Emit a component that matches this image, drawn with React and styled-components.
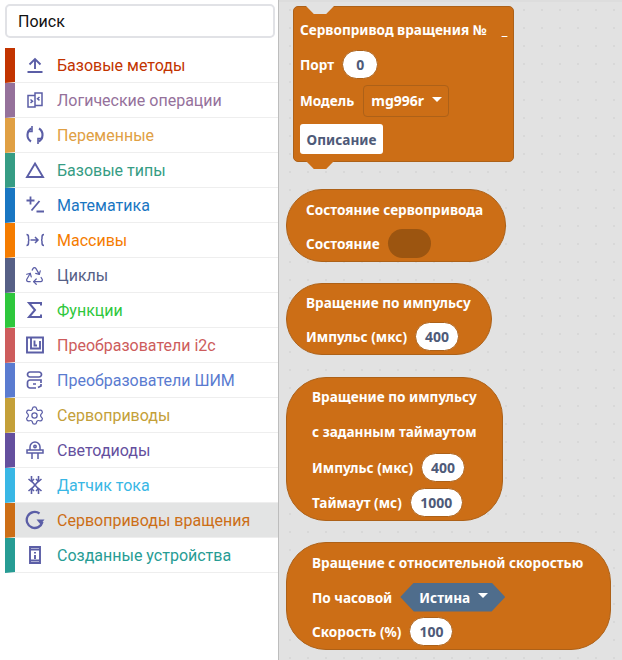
import React from 'react';
import styled, { createGlobalStyle, css } from 'styled-components';
import { Recycle, Settings } from 'lucide-react';

const ICON = '#5b5ea6';

const GlobalStyle = createGlobalStyle`
  html, body {
    margin: 0;
    padding: 0;
    background: #fff;
  }
  body {
    width: 622px;
    height: 660px;
    overflow: hidden;
    font-family: Roboto, "Liberation Sans", sans-serif;
  }
`;

const Page = styled.div`
  display: flex;
  width: 622px;
  height: 660px;
  overflow: hidden;
`;

const Sidebar = styled.aside`
  flex: 0 0 279px;
  box-sizing: border-box;
  padding: 4px 0 0 5px;
  background: #fff;
  border-right: 1px solid #bdbdbd;
`;

const SearchBox = styled.div`
  box-sizing: border-box;
  width: 270px;
  height: 34px;
  margin: 0 0 10px;
  padding: 0 11px;
  display: flex;
  align-items: center;
  border: 2px solid #e1e2e6;
  border-radius: 5px;
  font-size: 16px;
  color: #111;
`;

const CategoryList = styled.ul`
  list-style: none;
  margin: 0;
  padding: 0;
`;

const Category = styled.li`
  box-sizing: border-box;
  height: 35px;
  display: flex;
  align-items: center;
  border-left: 10px solid ${p => p.$color};
  border-bottom: 1px solid #eeeeee;
  background: ${p => (p.$active ? '#e3e4e4' : '#fff')};
  color: ${p => p.$color};
  font-size: 16px;
`;

const IconSlot = styled.span`
  flex: 0 0 42px;
  display: flex;
  justify-content: center;
  padding-right: 3px;
  box-sizing: border-box;
  svg {
    display: block;
  }
`;

const Workspace = styled.main`
  flex: 1;
  min-width: 0;
  display: flex;
  flex-direction: column;
  align-items: flex-start;
  padding: 6px 0 0 7px;
  background-color: #e2e2e2;
  background-image: radial-gradient(circle at center, #d2d2d2 0.6px, transparent 0.9px);
  background-size: 18px 18px;
  background-position: 2px 1px;
  box-shadow: inset 0 2px 0 #dddddd;
  overflow: hidden;
`;

const blockBase = css`
  box-sizing: border-box;
  background: #cc6e16;
  border: 1px solid #ad6118;
  color: #fff;
  font-family: "Noto Sans", "Open Sans", sans-serif;
  font-weight: 700;
  font-size: 13.6px;
  display: flex;
  flex-direction: column;
`;

const Block = styled.section`
  ${blockBase};
  width: ${p => p.$width}px;
  height: ${p => p.$height}px;
  margin-top: ${p => p.$gap}px;
  padding: ${p => p.$pad};
  border-radius: ${p => p.$radius}px;
`;

const NotchedBlock = styled.section`
  ${blockBase};
  position: relative;
  width: 221px;
  height: 156px;
  margin-left: 7px;
  padding: 6px 0 0 6px;
  border-radius: 5px;

  &::before {
    content: '';
    position: absolute;
    top: -1px;
    left: 12px;
    width: 28px;
    height: 8px;
    background: #e2e2e2;
    clip-path: polygon(0 0, 100% 0, 72% 100%, 28% 100%);
  }

  &::after {
    content: '';
    position: absolute;
    bottom: -8px;
    left: 12px;
    width: 28px;
    height: 8px;
    background: #cc6e16;
    clip-path: polygon(0 0, 100% 0, 72% 100%, 28% 100%);
  }
`;

const Row = styled.div`
  height: ${p => p.$height ?? 36}px;
  display: flex;
  align-items: center;
  gap: ${p => p.$gap ?? 8}px;
  white-space: nowrap;
`;

const Pill = styled.span`
  box-sizing: border-box;
  width: ${p => p.$width}px;
  height: 29px;
  display: flex;
  align-items: center;
  justify-content: center;
  background: #fff;
  border: 1px solid #ad6118;
  border-radius: 15px;
  color: #4e5a78;
  font-size: 14px;
`;

const Toggle = styled.span`
  width: 43px;
  height: 29px;
  border-radius: 15px;
  background: #9c5510;
`;

const Caret = styled.i`
  display: inline-block;
  width: 0;
  height: 0;
  margin-left: 8px;
  margin-top: -3px;
  border-left: 5px solid transparent;
  border-right: 5px solid transparent;
  border-top: 5px solid #fff;
`;

const ModelSelect = styled.span`
  box-sizing: border-box;
  width: 86px;
  height: 32px;
  display: flex;
  align-items: center;
  padding-left: 7px;
  border: 1px solid #ad6118;
  border-radius: 4px;
  font-size: 14px;
`;

const HexSelect = styled.span`
  width: 105px;
  height: 29px;
  display: flex;
  align-items: center;
  justify-content: center;
  padding-left: 2px;
  box-sizing: border-box;
  background: #4f6d8c;
  clip-path: polygon(0 50%, 13% 0, 87% 0, 100% 50%, 87% 100%, 13% 100%);
`;

const DescriptionButton = styled.button`
  box-sizing: border-box;
  width: 83px;
  height: 30px;
  margin-top: 5px;
  padding: 0;
  background: #fff;
  border: none;
  border-radius: 3px;
  color: #4e5a78;
  font: inherit;
`;

const Icon = ({ children, size = 20, width = 1.6 }) => (
  <svg
    width={size}
    height={size}
    viewBox="0 0 20 20"
    fill="none"
    stroke={ICON}
    strokeWidth={width}
  >
    {children}
  </svg>
);

const categories = [
  {
    label: 'Базовые методы',
    color: '#c23400',
    icon: (
      <Icon width={1.9}>
        <path d="M2.500 17h15M10 14V4M4.500 9.500 10 4l5.500 5.500" />
      </Icon>
    ),
  },
  {
    label: 'Логические операции',
    color: '#95719b',
    icon: (
      <Icon width={1.5}>
        <path d="M10 5.500H3v11.500h7zM10 3h7v12.500h-7zM10 3v14" />
        <path d="M5.500 9.500l2 1.700-2 1.700" />
        <path d="M14.500 7l-2 1.700 2 1.700" />
      </Icon>
    ),
  },
  {
    label: 'Переменные',
    color: '#e0a044',
    icon: (
      <Icon width={2.1}>
        <path d="M6 16.500A7.500 7.500 0 0 1 6.500 3.500M14 3.500a7.500 7.500 0 0 1-.5 13" />
        <path d="M7 1v5.500H2.500M13 19v-5.500h4.500" strokeWidth={1.6} />
      </Icon>
    ),
  },
  {
    label: 'Базовые типы',
    color: '#369c84',
    icon: (
      <Icon width={1.9}>
        <path d="M10 3.500 18 17H2z" />
      </Icon>
    ),
  },
  {
    label: 'Математика',
    color: '#1976c2',
    icon: (
      <Icon width={1.8}>
        <path d="M1.500 5.500h8M5.500 1.500v8M14.500 6 6.500 15.500M11.500 16.500h7.500" />
      </Icon>
    ),
  },
  {
    label: 'Массивы',
    color: '#f57c00',
    icon: (
      <Icon width={1.5}>
        <path d="M1.500 4.500c2 0 2 1 2 2.500v1.500c0 1 .5 1.500 1 1.500-.5 0-1 .5-1 1.500V13c0 1.500 0 2.500-2 2.500" />
        <path d="M5.500 10h7.500M10 7l3 3-3 3" />
        <path d="M19 4.500c-2 0-2 1-2 2.500v1.500c0 1-.5 1.500-1 1.500.5 0 1 .5 1 1.500V13c0 1.500 0 2.500 2 2.500" />
      </Icon>
    ),
  },
  {
    label: 'Циклы',
    color: '#566086',
    icon: <Recycle size={21} color={ICON} strokeWidth={1.4} />,
  },
  {
    label: 'Функции',
    color: '#2ec73c',
    icon: (
      <Icon width={2}>
        <path d="M16 5.500V3H4l6 7-6 7h12v-2.500" />
      </Icon>
    ),
  },
  {
    label: 'Преобразователи i2c',
    color: '#cd5c5c',
    icon: (
      <Icon width={1.9}>
        <path d="M2 2.500h16v15H2zM6 2.500v11h9V6M9.500 5.500v5h2.500" />
      </Icon>
    ),
  },
  {
    label: 'Преобразователи ШИМ',
    color: '#5a7bd0',
    icon: (
      <Icon width={1.7}>
        <path d="M14 7H5a2.500 2.500 0 0 1 0-5h9a2.500 2.500 0 0 1 0 5z" />
        <path d="M11 18H5a2.500 2.500 0 0 1-2.500-2.500v-3A2.500 2.500 0 0 1 5 10h11v3M8 14h3M16 14v2l-3 1.500" />
      </Icon>
    ),
  },
  {
    label: 'Сервоприводы',
    color: '#c4a039',
    icon: <Settings size={21} color={ICON} strokeWidth={1.4} />,
  },
  {
    label: 'Светодиоды',
    color: '#644f9e',
    icon: (
      <Icon width={1.5}>
        <path d="M5 10V7a5 5 0 0 1 10 0v3M2 10h16v3H2zM7 13v6M13 13v6" />
        <circle cx="10" cy="6.500" r="1.200" />
      </Icon>
    ),
  },
  {
    label: 'Датчик тока',
    color: '#39b7e5',
    icon: (
      <Icon width={1.6}>
        <path d="M6.500 1v5l7 8v5M13.500 1v5l-7 8v5" />
        <path d="M3.500 4 6.500 6.500 9 4M11 4l2.500 2.500L16.500 4M3.500 16l3-2.500L9 16M11 16l2.500-2.500 3 2.500" />
      </Icon>
    ),
  },
  {
    label: 'Сервоприводы вращения',
    color: '#cc6e16',
    active: true,
    icon: (
      <Icon width={2.3}>
        <path d="M14.500 3.500A8 8 0 1 0 17.500 12" />
        <path d="M11.500 9.500h8l-4 5z" fill={ICON} stroke="none" />
      </Icon>
    ),
  },
  {
    label: 'Созданные устройства',
    color: '#279c94',
    icon: (
      <Icon width={1.9}>
        <path d="M5 2h10v16H5z" />
        <path d="M5 4.500h10M5 15.500h10" />
        <path d="M10 7v1.500M10 10v4" />
      </Icon>
    ),
  },
];

export default function App() {
  return (
    <>
      <GlobalStyle />
      <Page>
        <Sidebar>
          <SearchBox>Поиск</SearchBox>
          <CategoryList>
            {categories.map(c => (
              <Category key={c.label} $color={c.color} $active={c.active}>
                <IconSlot>{c.icon}</IconSlot>
                {c.label}
              </Category>
            ))}
          </CategoryList>
        </Sidebar>
        <Workspace>
          <NotchedBlock>
            <Row $height={33} $gap={15}>
              Сервопривод вращения №
              <span>_</span>
            </Row>
            <Row>
              Порт
              <Pill $width={36}>0</Pill>
            </Row>
            <Row $height={37} $gap={9}>
              Модель
              <ModelSelect>
                mg996r
                <Caret />
              </ModelSelect>
            </Row>
            <DescriptionButton>Описание</DescriptionButton>
          </NotchedBlock>

          <Block $width={220} $height={73} $gap={27} $radius={36} $pad="2px 0 0 19px">
            <Row>Состояние сервопривода</Row>
            <Row>
              Состояние
              <Toggle />
            </Row>
          </Block>

          <Block $width={206} $height={72} $gap={21} $radius={36} $pad="1px 0 0 19px">
            <Row>Вращение по импульсу</Row>
            <Row>
              Импульс (мкс)
              <Pill $width={44}>400</Pill>
            </Row>
          </Block>

          <Block $width={217} $height={144} $gap={22} $radius={40} $pad="1px 0 0 25px">
            <Row>Вращение по импульсу</Row>
            <Row>с заданным таймаутом</Row>
            <Row>
              Импульс (мкс)
              <Pill $width={44}>400</Pill>
            </Row>
            <Row>
              Таймаут (мс)
              <Pill $width={53}>1000</Pill>
            </Row>
          </Block>

          <Block $width={325} $height={108} $gap={21} $radius={40} $pad="2px 0 0 25px">
            <Row>Вращение с относительной скоростью</Row>
            <Row>
              По часовой
              <HexSelect>
                Истина
                <Caret />
              </HexSelect>
            </Row>
            <Row>
              Скорость (%)
              <Pill $width={44}>100</Pill>
            </Row>
          </Block>
        </Workspace>
      </Page>
    </>
  );
}
